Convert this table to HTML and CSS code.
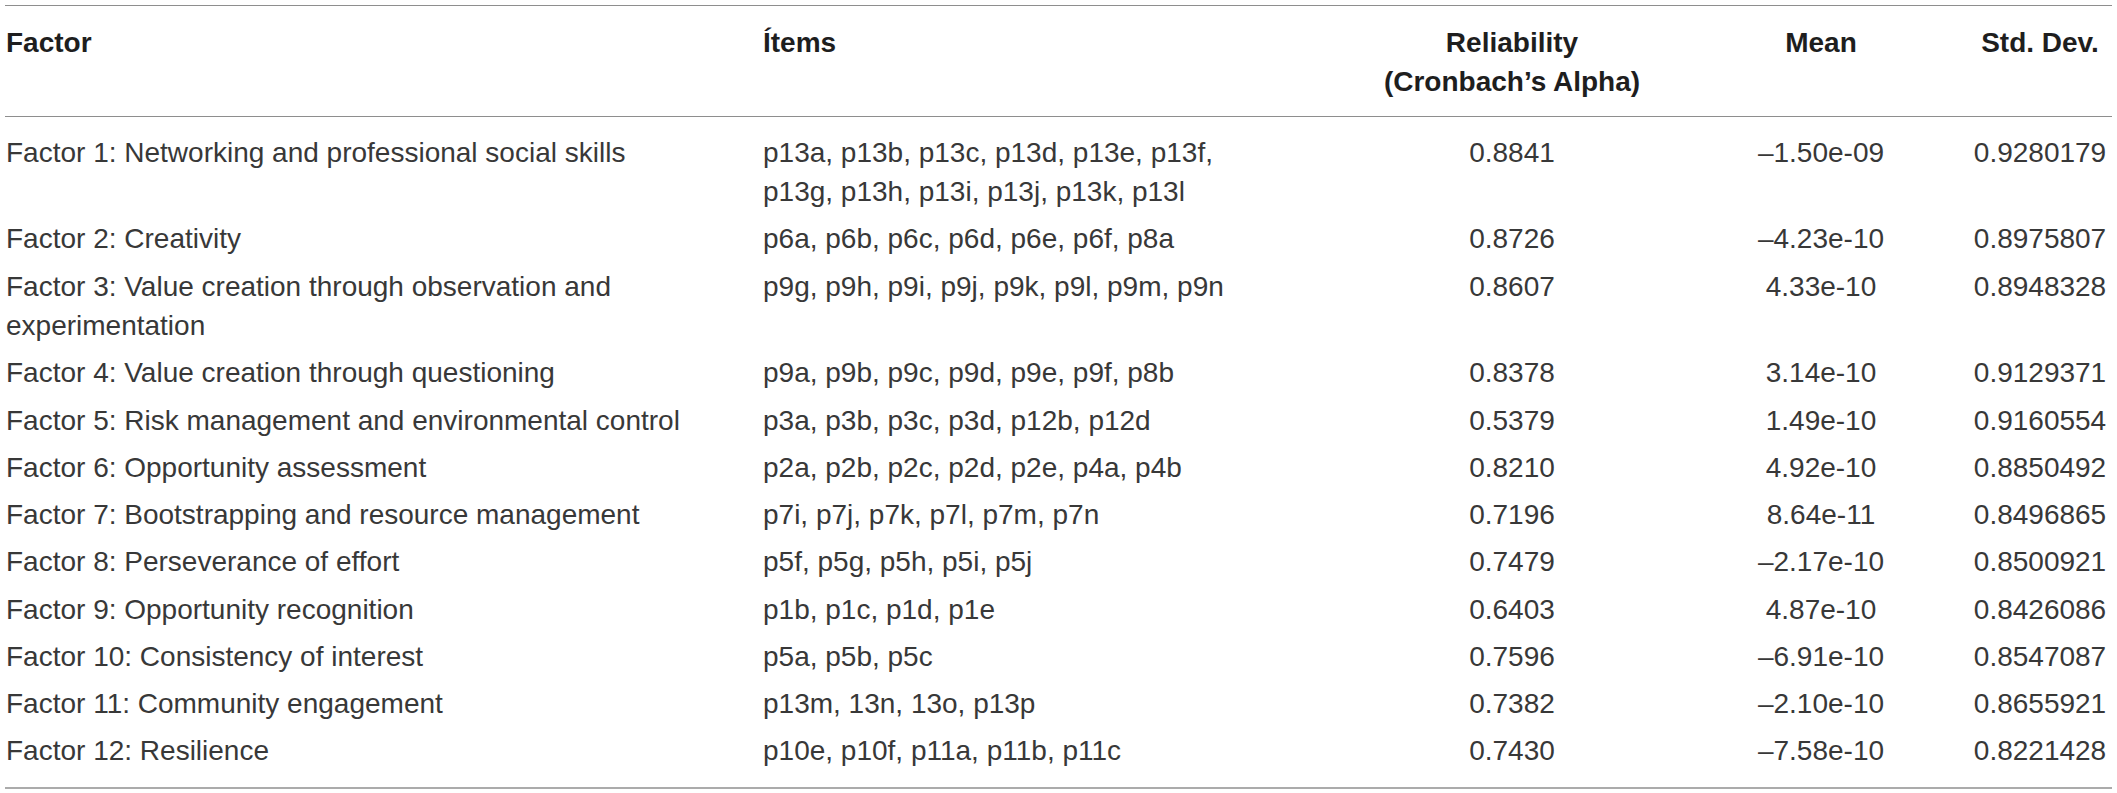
FILE: index.html
```html
<!DOCTYPE html>
<html lang="en">
<head>
<meta charset="utf-8">
<title>Factor reliability</title>
<link rel="stylesheet" href="styles.css">
</head>
<body>
<table class="factors">
  <colgroup>
    <col class="c-factor">
    <col class="c-items">
    <col class="c-rel">
    <col class="c-mean">
    <col class="c-sd">
  </colgroup>
  <thead>
    <tr>
      <th class="left">Factor</th>
      <th class="left items">Ítems</th>
      <th class="num">Reliability<br>(Cronbach’s Alpha)</th>
      <th class="num">Mean</th>
      <th class="num sd">Std. Dev.</th>
    </tr>
  </thead>
  <tbody>
    <tr><td>Factor 1: Networking and professional social skills</td><td class="items"><span class="wrap">p13a, p13b, p13c, p13d, p13e, p13f, p13g, p13h, p13i, p13j, p13k, p13l</span></td><td class="num">0.8841</td><td class="num">–1.50e-09</td><td class="num sd">0.9280179</td></tr>
    <tr><td>Factor 2: Creativity</td><td class="items"><span class="wrap">p6a, p6b, p6c, p6d, p6e, p6f, p8a</span></td><td class="num">0.8726</td><td class="num">–4.23e-10</td><td class="num sd">0.8975807</td></tr>
    <tr><td>Factor 3: Value creation through observation and experimentation</td><td class="items"><span class="wrap">p9g, p9h, p9i, p9j, p9k, p9l, p9m, p9n</span></td><td class="num">0.8607</td><td class="num">4.33e-10</td><td class="num sd">0.8948328</td></tr>
    <tr><td>Factor 4: Value creation through questioning</td><td class="items"><span class="wrap">p9a, p9b, p9c, p9d, p9e, p9f, p8b</span></td><td class="num">0.8378</td><td class="num">3.14e-10</td><td class="num sd">0.9129371</td></tr>
    <tr><td>Factor 5: Risk management and environmental control</td><td class="items"><span class="wrap">p3a, p3b, p3c, p3d, p12b, p12d</span></td><td class="num">0.5379</td><td class="num">1.49e-10</td><td class="num sd">0.9160554</td></tr>
    <tr><td>Factor 6: Opportunity assessment</td><td class="items"><span class="wrap">p2a, p2b, p2c, p2d, p2e, p4a, p4b</span></td><td class="num">0.8210</td><td class="num">4.92e-10</td><td class="num sd">0.8850492</td></tr>
    <tr><td>Factor 7: Bootstrapping and resource management</td><td class="items"><span class="wrap">p7i, p7j, p7k, p7l, p7m, p7n</span></td><td class="num">0.7196</td><td class="num">8.64e-11</td><td class="num sd">0.8496865</td></tr>
    <tr><td>Factor 8: Perseverance of effort</td><td class="items"><span class="wrap">p5f, p5g, p5h, p5i, p5j</span></td><td class="num">0.7479</td><td class="num">–2.17e-10</td><td class="num sd">0.8500921</td></tr>
    <tr><td>Factor 9: Opportunity recognition</td><td class="items"><span class="wrap">p1b, p1c, p1d, p1e</span></td><td class="num">0.6403</td><td class="num">4.87e-10</td><td class="num sd">0.8426086</td></tr>
    <tr><td>Factor 10: Consistency of interest</td><td class="items"><span class="wrap">p5a, p5b, p5c</span></td><td class="num">0.7596</td><td class="num">–6.91e-10</td><td class="num sd">0.8547087</td></tr>
    <tr><td>Factor 11: Community engagement</td><td class="items"><span class="wrap">p13m, 13n, 13o, p13p</span></td><td class="num">0.7382</td><td class="num">–2.10e-10</td><td class="num sd">0.8655921</td></tr>
    <tr><td>Factor 12: Resilience</td><td class="items"><span class="wrap">p10e, p10f, p11a, p11b, p11c</span></td><td class="num">0.7430</td><td class="num">–7.58e-10</td><td class="num sd">0.8221428</td></tr>
  </tbody>
</table>
</body>
</html>
```
FILE: styles.css
```css
html, body {
  margin: 0;
  padding: 0;
  background: #ffffff;
}

body {
  padding: 5px 0 0 5px;
  font-family: "Liberation Sans", Arial, sans-serif;
  font-size: 28px;
  line-height: 39.5px;
  color: #383838;
}

.factors {
  width: 2107px;
  table-layout: fixed;
  border-collapse: separate;
  border-spacing: 0;
  border-top: 1px solid #8e8e8e;
  border-bottom: 2px solid #ababab;
}

.c-factor { width: 758px; }
.c-items { width: 537px; }
.c-rel { width: 424px; }
.c-mean { width: 194px; }
.c-sd { width: 194px; }

.factors th {
  font-weight: bold;
  color: #1e1e1e;
  vertical-align: top;
  padding: 16.5px 0 14.5px 1px;
  border-bottom: 1px solid #8e8e8e;
}

.factors th.left {
  text-align: left;
}

.factors td {
  vertical-align: top;
  padding: 4px 0 3.75px 1px;
  text-align: left;
}

.factors tbody tr:first-child td {
  padding-top: 15.5px;
}

.factors tbody tr:last-child td {
  padding-bottom: 16px;
}

.factors .items {
  padding-left: 0;
}

.factors .wrap {
  display: block;
  width: 500px;
}

.factors .num {
  text-align: center;
  padding-left: 0;
}

.factors .sd {
  padding-left: 50px;
}
```
